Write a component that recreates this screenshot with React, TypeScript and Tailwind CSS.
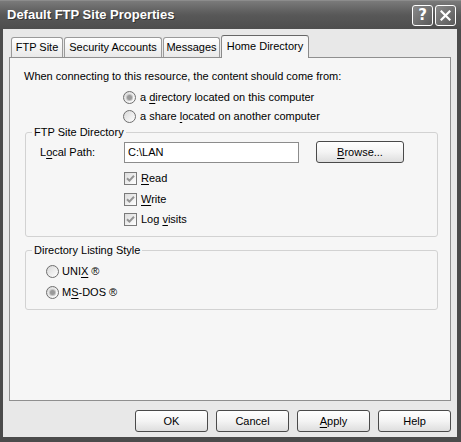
import type { ReactNode } from 'react'

const tabs = [
  { label: 'FTP Site', w: 'w-[52px]' },
  { label: 'Security Accounts', w: 'w-[98px]' },
  { label: 'Messages', w: 'w-[57px]' },
]

function U({ children }: { children: ReactNode }) {
  return <span className="underline underline-offset-[2px]">{children}</span>
}

function Radio({ checked }: { checked?: boolean }) {
  return (
    <span className="w-[13px] h-[13px] rounded-full border border-[#6e6e6e] bg-gradient-to-br from-[#d8d8d8] to-white flex items-center justify-center shrink-0">
      {checked && <span className="w-[5px] h-[5px] rounded-full bg-[#9a9a9a] ring-1 ring-[#c4c4c4]" />}
    </span>
  )
}

function Check() {
  return (
    <span className="w-[13px] h-[13px] border border-[#7a7a7a] bg-gradient-to-br from-[#dcdcdc] to-white flex items-center justify-center shrink-0">
      <svg width="9" height="9" viewBox="0 0 9 9">
        <path d="M1 4.2 L3.4 6.6 L8 1.8" fill="none" stroke="#939393" strokeWidth="2" />
      </svg>
    </span>
  )
}

function Button({ children, className = '' }: { children: ReactNode; className?: string }) {
  return (
    <button className={`h-[22px] rounded-[3px] border border-[#4a4a4a] bg-gradient-to-b from-white via-[#f4f4f4] to-[#dedede] text-[11px] text-black ${className}`}>
      {children}
    </button>
  )
}

export default function App() {
  return (
    <div className="w-[461px] h-[442px] bg-[#4b4b4b] flex flex-col font-['Liberation_Sans',Arial,sans-serif] text-[11px] text-black select-none">
      <div className="h-[29px] shrink-0 flex items-center pl-[7px] pr-[5px] bg-gradient-to-b from-[#7a7a7a] via-[#585858] to-[#4e4e4e] border-t border-[#8c8c8c]">
        <span className="flex-1 text-white font-bold text-[13px] [text-shadow:1px_1px_0_#333]">
          Default FTP Site Properties
        </span>
        <div className="flex gap-[2px]">
          <span className="w-[21px] h-[21px] rounded-[3px] border border-white bg-gradient-to-br from-[#8a8a8a] to-[#5a5a5a] flex items-center justify-center text-white font-bold text-[15px] font-['DejaVu_Sans',sans-serif] leading-none">
            ?
          </span>
          <span className="w-[21px] h-[21px] rounded-[3px] border border-white bg-gradient-to-br from-[#8a8a8a] to-[#5a5a5a] flex items-center justify-center">
            <svg width="11" height="11" viewBox="0 0 11 11">
              <path d="M1.5 1.5 L9.5 9.5 M9.5 1.5 L1.5 9.5" stroke="white" strokeWidth="2.2" strokeLinecap="square" />
            </svg>
          </span>
        </div>
      </div>

      <div className="flex-1 ml-[3px] mr-[4px] mb-[5px] bg-[#e8e8e8] pl-[6px] pr-[6px] pt-[6px] flex flex-col">
        <div className="flex items-end h-[22px] pl-[2px] gap-[1px]">
          {tabs.map(t => (
            <div key={t.label} className={`${t.w} h-[20px] rounded-t-[3px] border border-b-0 border-[#9a9a9a] bg-gradient-to-b from-white to-[#e9e9e9] flex items-center justify-center`}>
              {t.label}
            </div>
          ))}
          <div className="w-[88px] h-[23px] -mb-px relative z-10 rounded-t-[3px] border border-b-0 border-[#8a8a8a] border-t-[#666] bg-[#f6f6f6] flex items-center justify-center pb-[2px]">
            Home Directory
          </div>
        </div>

        <div className="h-[344px] border border-[#8f8f8f] bg-[#f6f6f6] flex flex-col pt-[10px]">
          <div className="h-[16px] flex items-center pl-[14px]">
            When connecting to this resource, the content should come from:
          </div>
          <div className="h-[16px] mt-[5px] flex items-center gap-[4px] pl-[113px]">
            <Radio checked />
            <span>a <U>d</U>irectory located on this computer</span>
          </div>
          <div className="h-[16px] mt-[3px] flex items-center gap-[4px] pl-[113px]">
            <Radio />
            <span>a share <U>l</U>ocated on another computer</span>
          </div>

          <fieldset className="ml-[15px] mr-[12px] mt-[2px] h-[111px] border border-[#d2d2d2] rounded-[3px]">
            <legend className="ml-[6px] px-[2px] h-[12px] leading-[12px]">FTP Site Directory</legend>
            <div className="pl-[14px]">
              <div className="flex items-center mt-[3px]">
                <span className="w-[84px]">L<U>o</U>cal Path:</span>
                <div className="w-[175px] h-[21px] border border-[#8c8c8c] bg-white flex items-center pl-[3px]">C:\LAN</div>
                <Button className="w-[88px] ml-[17px]"><U>B</U>rowse...</Button>
              </div>
              <div className="h-[16px] mt-[7px] flex items-center gap-[4px] pl-[84px]">
                <Check />
                <span><U>R</U>ead</span>
              </div>
              <div className="h-[16px] mt-[5px] flex items-center gap-[4px] pl-[84px]">
                <Check />
                <span><U>W</U>rite</span>
              </div>
              <div className="h-[16px] mt-[4px] flex items-center gap-[4px] pl-[84px]">
                <Check />
                <span>Log <U>v</U>isits</span>
              </div>
            </div>
          </fieldset>

          <fieldset className="ml-[15px] mr-[12px] mt-[7px] h-[66px] border border-[#d2d2d2] rounded-[3px]">
            <legend className="ml-[6px] px-[2px] h-[12px] leading-[12px]">Directory Listing Style</legend>
            <div className="pl-[20px]">
              <div className="h-[16px] mt-[7px] flex items-center gap-[3px]">
                <Radio />
                <span>UNI<U>X</U> ®</span>
              </div>
              <div className="h-[16px] mt-[5px] flex items-center gap-[3px]">
                <Radio checked />
                <span>M<U>S</U>-DOS ®</span>
              </div>
            </div>
          </fieldset>
        </div>

        <div className="flex justify-end gap-[8px] mt-[9px]">
          <Button className="w-[73px]">OK</Button>
          <Button className="w-[73px]">Cancel</Button>
          <Button className="w-[73px]"><U>A</U>pply</Button>
          <Button className="w-[73px]">Help</Button>
        </div>
      </div>
    </div>
  )
}
